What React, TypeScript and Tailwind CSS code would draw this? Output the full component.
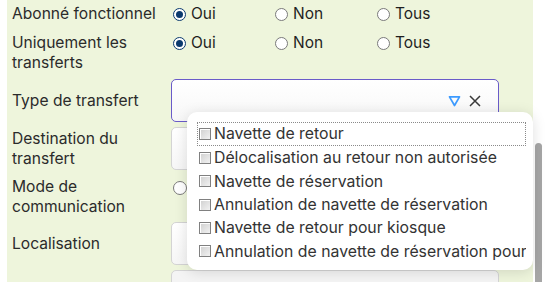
import React from "react";

const font = { fontFamily: "Inter, 'Open Sans', sans-serif" };

function Radio({ checked }: { checked?: boolean }) {
  return checked ? (
    <span className="w-[13px] h-[13px] rounded-full border-[1.5px] border-[#0b3a6e] bg-white flex items-center justify-center shrink-0">
      <span className="w-[7px] h-[7px] rounded-full bg-[#0b3a6e]" />
    </span>
  ) : (
    <span className="w-[13px] h-[13px] rounded-full border border-[#7a7a7a] bg-white shrink-0" />
  );
}

function RadioGroup({ value }: { value: string }) {
  const opts = ["Oui", "Non", "Tous"];
  return (
    <div className="flex ml-[2px]">
      {opts.map((o) => (
        <div key={o} className="w-[102px] flex items-center gap-[5px] text-[15.5px] text-[#1f1f1f] leading-[20px]">
          <Radio checked={o === value} />
          <span>{o}</span>
        </div>
      ))}
    </div>
  );
}

function Box({ children, focused, gray }: { children?: React.ReactNode; focused?: boolean; gray?: boolean }) {
  return (
    <div
      className={
        "w-[328px] h-[43px] rounded-[5px] border flex items-center justify-end pr-[17px] " +
        (focused
          ? "border-[#6a5bc9] bg-gradient-to-b from-white to-[#f7f7f7]"
          : gray
          ? "border-[#d4d4d4] bg-[#f4f4f4]"
          : "border-[#d4d4d4] bg-gradient-to-b from-white to-[#f6f6f6]")
      }
    >
      {children}
    </div>
  );
}

function Check() {
  return (
    <span className="w-[12px] h-[12px] border border-[#808080] bg-gradient-to-br from-[#cfcfcf] to-[#f2f2f2] shrink-0 shadow-[inset_1px_1px_0_#fff]" />
  );
}

export default function App() {
  const items = [
    "Navette de retour",
    "Délocalisation au retour non autorisée",
    "Navette de réservation",
    "Annulation de navette de réservation",
    "Navette de retour pour kiosque",
    "Annulation de navette de réservation pour kiosque",
  ];
  return (
    <div className="w-[552px] h-[282px] overflow-hidden bg-white relative" style={font}>
      <div className="ml-[7px] w-[526px] h-[282px] bg-[#eef5dc] pl-[5px] pt-[4px] text-[15.6px] text-[#2b2b2b]">
        {/* row 1 */}
        <div className="flex items-start h-[20px]">
          <div className="w-[159px] leading-[20px] whitespace-nowrap">Abonné fonctionnel</div>
          <RadioGroup value="Oui" />
        </div>
        {/* row 2 */}
        <div className="flex items-start mt-[9px] h-[40px]">
          <div className="w-[159px] leading-[20px]">
            Uniquement les
            <br />
            transferts
          </div>
          <RadioGroup value="Oui" />
        </div>
        {/* row 3 */}
        <div className="flex items-center mt-[6px] h-[43px]">
          <div className="w-[159px] leading-[20px]">Type de transfert</div>
          <Box focused>
            <svg width="13" height="12" viewBox="0 0 13 12" className="mr-[8px]">
              <path d="M1.5 1.8 H11.5 L6.5 10.5 Z" fill="none" stroke="#3d9bff" strokeWidth="1.7" strokeLinejoin="round" />
            </svg>
            <svg width="12" height="12" viewBox="0 0 12 12">
              <path d="M1 1 L11 11 M11 1 L1 11" stroke="#3a3a3a" strokeWidth="1.5" />
            </svg>
          </Box>
        </div>
        {/* row 4 */}
        <div className="flex items-center mt-[5px] h-[43px]">
          <div className="w-[159px] leading-[20px]">
            Destination du
            <br />
            transfert
          </div>
          <Box />
        </div>
        {/* row 5 */}
        <div className="flex items-start mt-[5px] h-[44px] pt-[2px]">
          <div className="w-[159px] leading-[20px]">
            Mode de
            <br />
            communication
          </div>
          <div className="ml-[2px] mt-[4px]">
            <span className="block w-[14px] h-[14px] rounded-full border border-[#7a7a7a] bg-white" />
          </div>
        </div>
        {/* row 6 */}
        <div className="flex items-center mt-[3px] h-[43px]">
          <div className="w-[159px] leading-[20px]">Localisation</div>
          <Box />
        </div>
        {/* row 7 */}
        <div className="flex items-center mt-[5px] h-[43px]">
          <div className="w-[159px]" />
          <Box gray />
        </div>
      </div>

      {/* scrollbar */}
      <div className="absolute left-[535px] top-[143px] w-[7px] h-[150px] bg-[#a6a6a6] rounded-t-[4px]" />

      {/* dropdown */}
      <div className="absolute left-[187px] top-[112px] w-[346px] h-[158px] bg-white rounded-[10px] shadow-[0_2px_14px_rgba(0,0,0,0.13)] pl-[10px] pr-[7px] pt-[10px]">
        <div className="w-[329px] overflow-hidden text-[15.8px] text-[#333]">
          {items.map((t, i) => (
            <div
              key={t}
              className={
                "flex items-center gap-[3px] whitespace-nowrap pl-[1px] " +
                (i === 0 ? "h-[24px] border border-dotted border-[#8a8a8a]" : "h-[23.3px] pt-[1px] border border-transparent")
              }
            >
              <Check />
              <span>{t}</span>
            </div>
          ))}
        </div>
      </div>
    </div>
  );
}
